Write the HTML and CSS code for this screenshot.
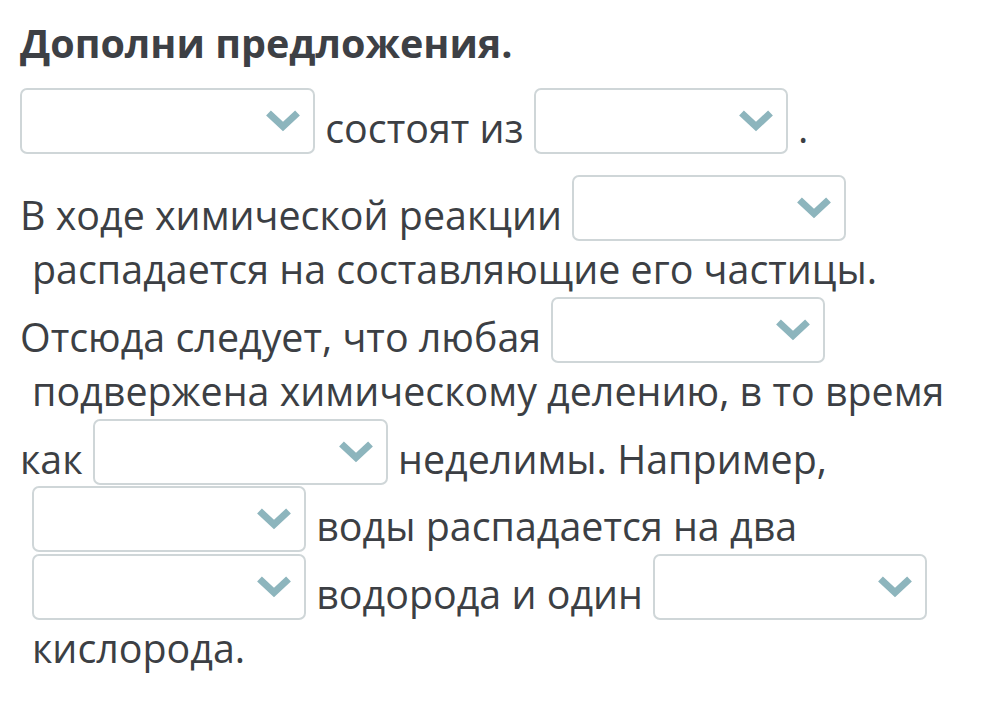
FILE: index.html
```html
<!DOCTYPE html>
<html>
<head>
  <meta name="viewport" content="width=device-width, initial-scale=1.0">
  <title>Дополни предложения</title>
  <link rel="stylesheet" href="styles.css">
</head>
<body>
  <div class="task">
    <h1 class="task-title">Дополни предложения.</h1>

    <p class="sentence">
      <span class="blank wide"><svg viewBox="0 0 36 24"><polyline points="3.5,4 18,17.5 32.5,4"/></svg></span> состоят из <span class="blank narrow"><svg viewBox="0 0 36 24"><polyline points="3.5,4 18,17.5 32.5,4"/></svg></span> .
    </p>

    <p class="sentence">
      <span class="line">В ходе химической реакции <span class="blank"><svg viewBox="0 0 36 24"><polyline points="3.5,4 18,17.5 32.5,4"/></svg></span></span>
      <span class="line indent">распадается на составляющие его частицы.</span>
      <span class="line">Отсюда следует, что любая <span class="blank"><svg viewBox="0 0 36 24"><polyline points="3.5,4 18,17.5 32.5,4"/></svg></span></span>
      <span class="line indent">подвержена химическому делению, в то время</span>
      <span class="line">как <span class="blank wide"><svg viewBox="0 0 36 24"><polyline points="3.5,4 18,17.5 32.5,4"/></svg></span> неделимы. Например,</span>
      <span class="line indent"><span class="blank"><svg viewBox="0 0 36 24"><polyline points="3.5,4 18,17.5 32.5,4"/></svg></span> воды распадается на два</span>
      <span class="line indent"><span class="blank"><svg viewBox="0 0 36 24"><polyline points="3.5,4 18,17.5 32.5,4"/></svg></span> водорода и один <span class="blank"><svg viewBox="0 0 36 24"><polyline points="3.5,4 18,17.5 32.5,4"/></svg></span></span>
      <span class="line indent">кислорода.</span>
    </p>
  </div>
</body>
</html>
```

FILE: styles.css
```css
  body {
    margin: 0;
    padding: 18px 20px;
    background-color: #ffffff;
    color: #3c3f44;
    font-family: "Open Sans", "Noto Sans", sans-serif;
  }
  .task-title {
    margin: 0;
    font-size: 39.5px;
    font-weight: bold;
    line-height: 50px;
    color: #3d4045;
  }
  .sentence {
    margin: 20px 0 0 0;
    font-size: 39.4px;
    line-height: 54.5px;
    white-space: nowrap;
  }
  .sentence + .sentence {
    margin-top: 19px;
  }
  .line {
    display: block;
  }
  .indent {
    padding-left: 12px;
  }
  .blank {
    display: inline-block;
    box-sizing: border-box;
    width: 274px;
    height: 66px;
    padding: 19px 12px 0 0;
    border: 2px solid #cfd6d8;
    border-radius: 7px;
    background-color: #ffffff;
    vertical-align: -11px;
  }
  .blank.wide {
    width: 295px;
  }
  .blank.narrow {
    width: 254px;
  }
  .blank svg {
    display: block;
    width: 36px;
    height: 24px;
    margin-left: auto;
  }
  .blank polyline {
    fill: none;
    stroke: #8db5bd;
    stroke-width: 7;
  }
```
